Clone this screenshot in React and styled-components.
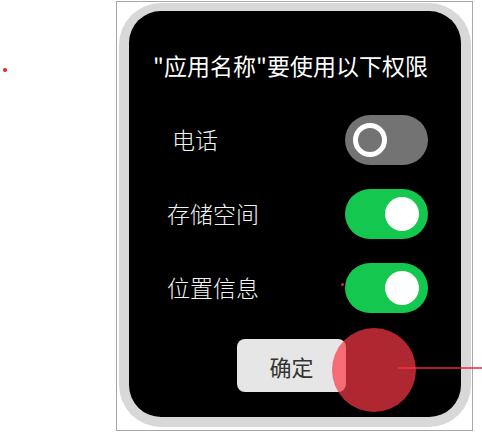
import React from 'react';
import styled, { createGlobalStyle } from 'styled-components';

const GlobalStyle = createGlobalStyle`
	html, body {
		margin: 0;
		padding: 0;
		background: #ffffff;
	}
	body {
		font-family: 'Noto Sans CJK SC', 'Noto Sans', sans-serif;
	}
`;

const permissions = [
	{ name: '电话', on: false, indent: 5 },
	{ name: '存储空间', on: true, indent: 0 },
	{ name: '位置信息', on: true, indent: 0 },
];

const App = () => {
	return (
		<Stage>
			<GlobalStyle />
			<Frame>
				<Bezel>
					<Screen>
						<Title>"应用名称"要使用以下权限</Title>
						<List>
							{permissions.map((p) => (
								<Row key={p.name}>
									<Label indent={p.indent}>{p.name}</Label>
									<Toggle on={p.on}>
										<Knob on={p.on} />
									</Toggle>
								</Row>
							))}
						</List>
						<Footer>
							<ConfirmButton>确定</ConfirmButton>
						</Footer>
					</Screen>
				</Bezel>
			</Frame>
			<Dot size={4} x={3} y={68} />
			<Dot size={3} x={341} y={283} />
			<TouchTrail />
			<Touch />
		</Stage>
	);
};

const Stage = styled.div`
	position: relative;
	width: 482px;
	height: 441px;
	padding: 1px 0 0 116px;
	box-sizing: border-box;
	overflow: hidden;
`;

const Frame = styled.div`
	width: 357px;
	height: 430px;
	box-sizing: border-box;
	border: 1px solid #a8a8a8;
	padding: 1px 0 0 2px;
`;

const Bezel = styled.div`
	width: 352px;
	height: 424px;
	box-sizing: border-box;
	background: #d8d8d8;
	border-radius: 42px;
	padding: 8px 10px 10px 10px;
`;

const Screen = styled.div`
	height: 100%;
	background: #000000;
	border-radius: 32px;
	display: flex;
	flex-direction: column;
`;

const Title = styled.div`
	margin-top: 39px;
	padding-right: 9px;
	height: 30px;
	line-height: 30px;
	text-align: center;
	color: #ffffff;
	font-size: 23px;
	font-weight: 400;
	white-space: nowrap;
`;

const List = styled.div`
	margin-top: 35px;
	display: flex;
	flex-direction: column;
	gap: 24px;
`;

const Row = styled.div`
	display: flex;
	justify-content: space-between;
	align-items: center;
	padding: 0 33px 0 38px;
	height: 50px;
`;

const Label = styled.span`
	padding-left: ${({ indent }) => indent}px;
	margin-top: -2px;
	color: #f2f2f2;
	font-family: 'Liberation Serif', 'Noto Sans CJK SC', serif;
	font-size: 23px;
	font-weight: 300;
`;

const Toggle = styled.div`
	position: relative;
	width: 83px;
	height: 50px;
	border-radius: 25px;
	background: ${({ on }) => (on ? '#14c84f' : '#737373')};
`;

const Knob = styled.div`
	position: absolute;
	top: 8px;
	width: 34px;
	height: 34px;
	box-sizing: border-box;
	border-radius: 50%;
	${({ on }) =>
		on
			? 'right: 9px; background: #ffffff;'
			: 'left: 8px; border: 5px solid #ffffff; background: transparent;'}
`;

const Footer = styled.div`
	margin-top: 26px;
	padding-left: 108px;
	display: flex;
`;

const ConfirmButton = styled.button`
	width: 109px;
	height: 53px;
	border: none;
	border-radius: 8px;
	background: #e6e6e6;
	color: #333333;
	font-family: 'Liberation Serif', 'Noto Sans CJK SC', serif;
	font-size: 22px;
	cursor: pointer;
`;

const Dot = styled.div`
	position: absolute;
	left: ${({ x }) => x}px;
	top: ${({ y }) => y}px;
	width: ${({ size }) => size}px;
	height: ${({ size }) => size}px;
	border-radius: 50%;
	background: #e8201e;
`;

const Touch = styled.div`
	position: absolute;
	left: 332px;
	top: 328px;
	width: 84px;
	height: 84px;
	border-radius: 50%;
	background: rgba(250, 55, 70, 0.7);
`;

const TouchTrail = styled.div`
	position: absolute;
	left: 398px;
	top: 367px;
	width: 84px;
	height: 2px;
	background: rgba(230, 40, 55, 0.75);
`;

export default App;
